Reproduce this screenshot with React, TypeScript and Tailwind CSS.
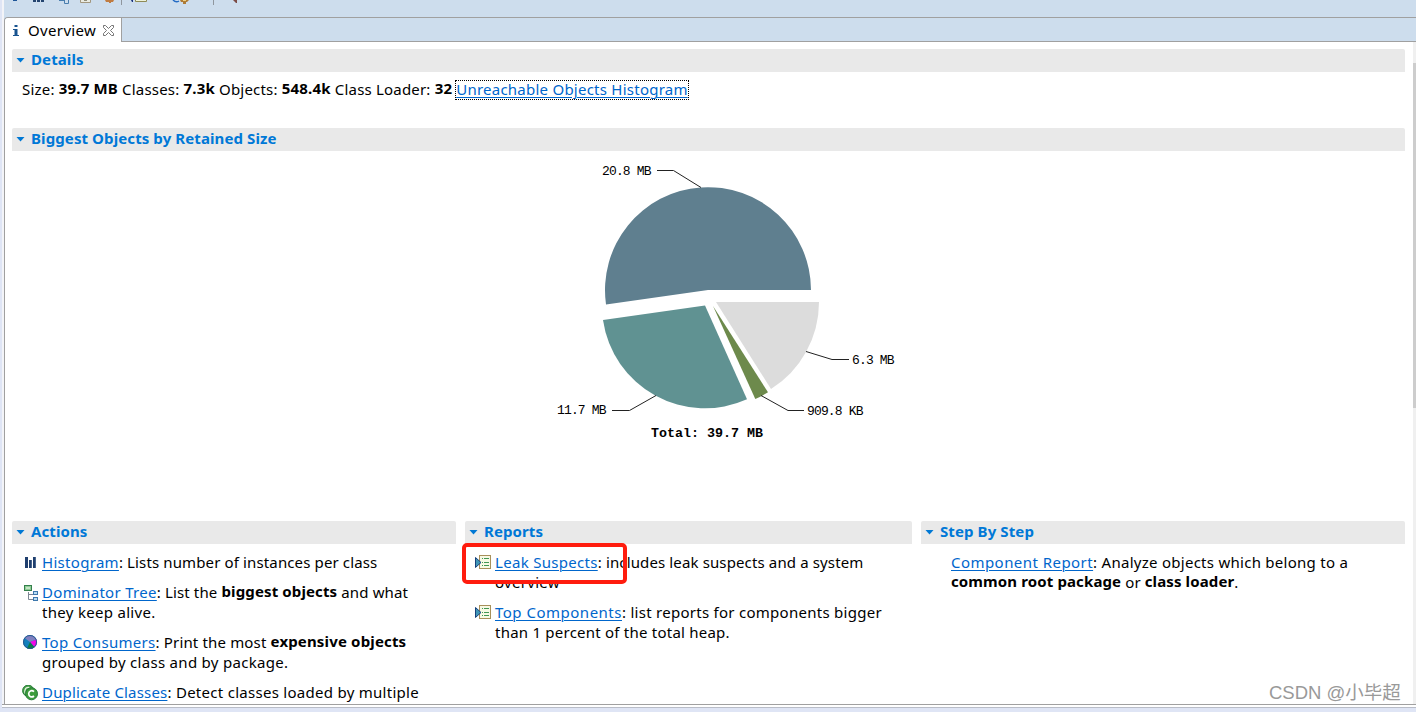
import React from "react";

function Tri() {
  return (
    <svg width="9" height="5" viewBox="0 0 9 5" className="mr-[6px] ml-[4px] shrink-0">
      <path d="M0.500 0H8.500L4.500 4.500Z" fill="#0078d4" />
    </svg>
  );
}

function Bar({ title }: { title: string }) {
  return (
    <h2 className="flex h-[23px] shrink-0 items-center rounded-t-[2px] bg-[#e9e9e9] text-[15px] leading-[22px] font-bold tracking-[0.100px] text-[#0078d7]">
      <Tri />
      <span className="relative -top-[2px]">{title}</span>
    </h2>
  );
}

function Link({ children, className = "tracking-[0.300px]" }: { children: React.ReactNode; className?: string }) {
  return <a className={`text-[#0066cc] underline decoration-1 underline-offset-2 ${className}`}>{children}</a>;
}

function B({ children }: { children: React.ReactNode }) {
  return <b className="relative -top-px">{children}</b>;
}

function HistogramIcon() {
  return (
    <svg width="16" height="16" viewBox="0 0 16 16">
      <path d="M3 2h3v11H3zM7 5h2v8H7zM11 2h2v11h-2z" fill="#1f3f6e" />
      <path d="M9 5h1v8H9zM13 2h1v11h-1z" fill="#49668f" />
    </svg>
  );
}

function TreeIcon() {
  return (
    <svg width="17" height="17" viewBox="0 0 17 17" fill="none">
      <path d="M6.500 7v7.500H11M6.500 9.500H11" stroke="#7d8794" />
      <rect x="2.500" y="-0.500" width="7" height="6" fill="#8fcb96" stroke="#34804c" />
      <path d="M2 0.500H10" stroke="#34804c" />
      <path d="M4 2h4v2H4z" fill="#c5e6c5" />
      <rect x="11.500" y="6.500" width="4" height="3" fill="#b8dcf2" stroke="#3e78ad" />
      <rect x="11.500" y="12.500" width="4" height="3" fill="#b8dcf2" stroke="#3e78ad" />
    </svg>
  );
}

function PieIcon() {
  return (
    <svg width="16" height="16" viewBox="0 0 16 16">
      <circle cx="8" cy="7" r="7" fill="#1280bd" />
      <path d="M8 7L2.500 3A7 7 0 0 1 14.500 4.500Z" fill="#8080c0" />
      <path d="M8 7L14.500 4.500A7 7 0 0 1 12.500 12.300Z" fill="#f208e8" />
      <path d="M8 7L12.500 12.300A7 7 0 0 1 5 13.300Z" fill="#087b47" />
      <circle cx="8" cy="7" r="6.500" fill="none" stroke="#28558d" />
    </svg>
  );
}

function DuplicateIcon() {
  return (
    <svg width="17" height="17" viewBox="0 0 17 17" fill="none">
      <circle cx="6.200" cy="5.700" r="5.600" fill="#48a047" stroke="#257b38" />
      <path d="M7.500 2.500C2 1.500 2 8.500 4 9" stroke="#e4f4df" strokeWidth="1.200" />
      <circle cx="9.500" cy="8.800" r="6" fill="#3d9c3c" stroke="#257b38" />
      <path d="M12 6.700C9.700 4.600 6.700 6 6.700 8.800S9.700 13 12 11" stroke="#fff" strokeWidth="1.700" />
    </svg>
  );
}

function ReportIcon() {
  return (
    <svg width="17" height="16" viewBox="0 0 17 16">
      <rect x="4.500" y="0.500" width="11" height="13" fill="#f7f9e4" stroke="#a8905a" />
      <path d="M7 3.500h1M7 7.500h1M7 10.500h1M9 3.500h5M9 7.500h5M9 10.500h5" stroke="#419653" />
      <path d="M0.500 2.500v10L6 7.500Z" fill="#3f95b5" stroke="#18417b" />
    </svg>
  );
}

function Item({ icon, children }: { icon?: React.ReactNode; children: React.ReactNode }) {
  return (
    <li className="flex items-start">
      <span className="mt-[3px] w-[20px] shrink-0">{icon}</span>
      <div className="whitespace-nowrap">{children}</div>
    </li>
  );
}

function Toolbar() {
  return (
    <svg width="260" height="17" viewBox="0 0 260 17" fill="none" className="block">
      <path d="M9 0h4v1H9z" fill="#1e5598" />
      <path d="M29 0h3v2h-3zM33 0h3v2h-3zM37 0h3v2h-3z" fill="#24446f" />
      <path d="M55 0.500h5M60.500 0v3.500h4V0" stroke="#4a7eae" />
      <path d="M76.500 0v2.500h10V0" stroke="#a2977f" fill="#e9ebe3" />
      <path d="M80 0h3v1h-3z" fill="#8f8d79" />
      <path d="M101 0h9l-1 2h-2v1h-2V2h-3z" fill="#c07c42" />
      <path d="M117.500 0v5M209.500 0v5" stroke="#8f969e" />
      <path d="M127 0h2v2h-1z" fill="#17307e" />
      <path d="M131.500 0v1.500h11V0" stroke="#8f8b57" fill="#edf2dc" />
      <path d="M169 0q3 3 6 1" stroke="#246bc4" strokeWidth="1.500" />
      <path d="M176 0h9l-2 2h-1v2h-3V2h-2z" fill="#ae7b36" />
      <path d="M179 0h3v1h-3z" fill="#f0d281" />
      <path d="M229 0h4v3h-1z" fill="#7b4b45" />
    </svg>
  );
}

function Chart() {
  return (
    <svg width="400" height="300" viewBox="540 155 400 300" className="block">
      <path d="M708 290H811A103 103 0 1 0 606 304.500Z" fill="#5f7f8f" />
      <path d="M705 305.500L603 320A103 103 0 0 0 747 399.300Z" fill="#609292" />
      <path d="M713 306L755.300 399A103 103 0 0 0 768 392.300Z" fill="#6d8a4c" />
      <path d="M716 302H819A103 103 0 0 1 771 389Z" fill="#dcdcdc" />
      <g fill="none" stroke="#222">
        <path d="M657 170.500H673.500L701 187.500" />
        <path d="M612 410.500H629.500L656 395.500" />
        <path d="M849 359.500H832L806 351.500" />
        <path d="M804 410.500H788L761 395.500" />
      </g>
      <g fontSize="13" letterSpacing="-0.850" fontFamily="'Liberation Mono', monospace" fill="#000">
        <text x="602" y="175">20.8 MB</text>
        <text x="557" y="414">11.7 MB</text>
        <text x="852" y="364">6.3 MB</text>
        <text x="807" y="415">909.8 KB</text>
        <text x="651" y="437" fontSize="13.330" letterSpacing="0" fontWeight="700">Total: 39.7 MB</text>
      </g>
    </svg>
  );
}

export default function App() {
  return (
    <div className="relative flex h-[712px] w-[1416px] flex-col overflow-hidden bg-[#dfe5f5] pl-[2px] font-['Noto_Sans',sans-serif] text-[15px] leading-5 text-black">
      <div className="flex h-[704px] flex-col border-l-2 border-l-[#f3f4f8] bg-[#cddded]">
        <div className="h-[17px] shrink-0"><Toolbar /></div>
        <div className="flex h-[25px] shrink-0 rounded-tl-[4px] border-t border-l border-[#a0a0a0]">
          <div className="flex h-[24px] w-[117px] items-center rounded-tl-[3px] border-r border-[#a0a0a0] bg-white">
            <svg width="6" height="11" viewBox="0 0 6 11" className="ml-[8px]">
              <path d="M1.500 0h3v2h-3zM0 4h4.500v6H6v1H0v-1h1.500V5H0z" fill="#17538f" />
            </svg>
            <span className="ml-[9px] tracking-[0.350px]">Overview</span>
            <svg width="11" height="11" viewBox="0 0 11 11" className="ml-[7px]" fill="none">
              <path d="M.5.5h2l3 3 3-3h2v2l-3 3 3 3v2h-2l-3-3-3 3h-2v-2l3-3-3-3Z" stroke="#666" strokeWidth=".9" />
            </svg>
          </div>
          <div className="grow border-b border-[#a0a0a0]" />
        </div>
        <div className="flex grow border-l border-[#a0a0a0] bg-white">
          <main className="flex w-[1400px] shrink-0 flex-col pt-[7px] pl-[7px]">
            <Bar title="Details" />
            <p className="mt-[8px] flex h-[20px] pl-[10px] leading-[19px] tracking-[0.190px] whitespace-pre">
              <span>Size: </span><B>39.7 MB</B><span> Classes: </span><B>7.3k</B><span> Objects: </span><B>548.4k</B><span> Class Loader: </span><B>32</B>
              <span className="ml-[3px] h-[20px] border border-dotted border-black leading-[17px]"><Link className="tracking-[0.240px]">Unreachable Objects Histogram</Link></span>
            </p>
            <div className="mt-[28px]"><Bar title="Biggest Objects by Retained Size" /></div>
            <div className="h-[370px] shrink-0 pt-[4px] pl-[528px]"><Chart /></div>
            <div className="grid h-[183px] shrink-0 grid-cols-[444px_447px_484px] gap-[9px] overflow-hidden">
              <section>
                <Bar title="Actions" />
                <ul className="mt-[8px] space-y-[10px] pl-[10px]">
                  <Item icon={<HistogramIcon />}><p className="tracking-[0.130px]"><Link>Histogram</Link>: Lists number of instances per class</p></Item>
                  <Item icon={<TreeIcon />}>
                    <p className="tracking-[0.130px]"><Link>Dominator Tree</Link>: List the <B>biggest objects</B> and what</p>
                    <p className="tracking-[0.300px]">they keep alive.</p>
                  </Item>
                  <Item icon={<PieIcon />}>
                    <p className="tracking-[0.160px]"><Link>Top Consumers</Link>: Print the most <B>expensive objects</B></p>
                    <p className="tracking-[0.300px]">grouped by class and by package.</p>
                  </Item>
                  <Item icon={<DuplicateIcon />}><p className="tracking-[0.280px]"><Link className="tracking-[0.180px]">Duplicate Classes</Link>: Detect classes loaded by multiple</p></Item>
                </ul>
              </section>
              <section>
                <Bar title="Reports" />
                <ul className="mt-[8px] space-y-[10px] pl-[10px]">
                  <Item icon={<ReportIcon />}>
                    <p className="tracking-[0.130px]"><Link>Leak Suspects</Link>: includes leak suspects and a system</p>
                    <p className="tracking-[0.300px]">overview</p>
                  </Item>
                  <Item icon={<ReportIcon />}>
                    <p className="tracking-[0.270px]"><Link className="tracking-[0.500px]">Top Components</Link>: list reports for components bigger</p>
                    <p className="tracking-[0.230px]">than 1 percent of the total heap.</p>
                  </Item>
                </ul>
              </section>
              <section>
                <Bar title="Step By Step" />
                <ul className="mt-[8px] pl-[10px]">
                  <Item>
                    <p className="tracking-[0.270px]"><Link className="tracking-[0.450px]">Component Report</Link>: Analyze objects which belong to a</p>
                    <p className="tracking-[0.120px]"><B>common root package</B> or <B>class loader</B>.</p>
                  </Item>
                </ul>
              </section>
            </div>
          </main>
          <div className="ml-auto w-[3px] shrink-0 bg-[#f0f0f0] pt-[21px]">
            <div className="h-[345px] bg-[#cdcdcd]" />
          </div>
        </div>
      </div>
      <div className="h-[4px] shrink-0 border-t border-b border-t-[#a0a0a0] border-b-[#b9bdc8] bg-white" />
      <div className="absolute top-[543px] left-[462px] h-[41px] w-[165px] rounded-[5px] border-4 border-[#ff1c0e]" />
      <div className="absolute top-[682px] left-[1269px] font-['Liberation_Sans','Noto_Sans_CJK_SC',sans-serif] text-[18.500px] leading-[22px] whitespace-nowrap text-[#999]">CSDN @小毕超</div>
    </div>
  );
}
